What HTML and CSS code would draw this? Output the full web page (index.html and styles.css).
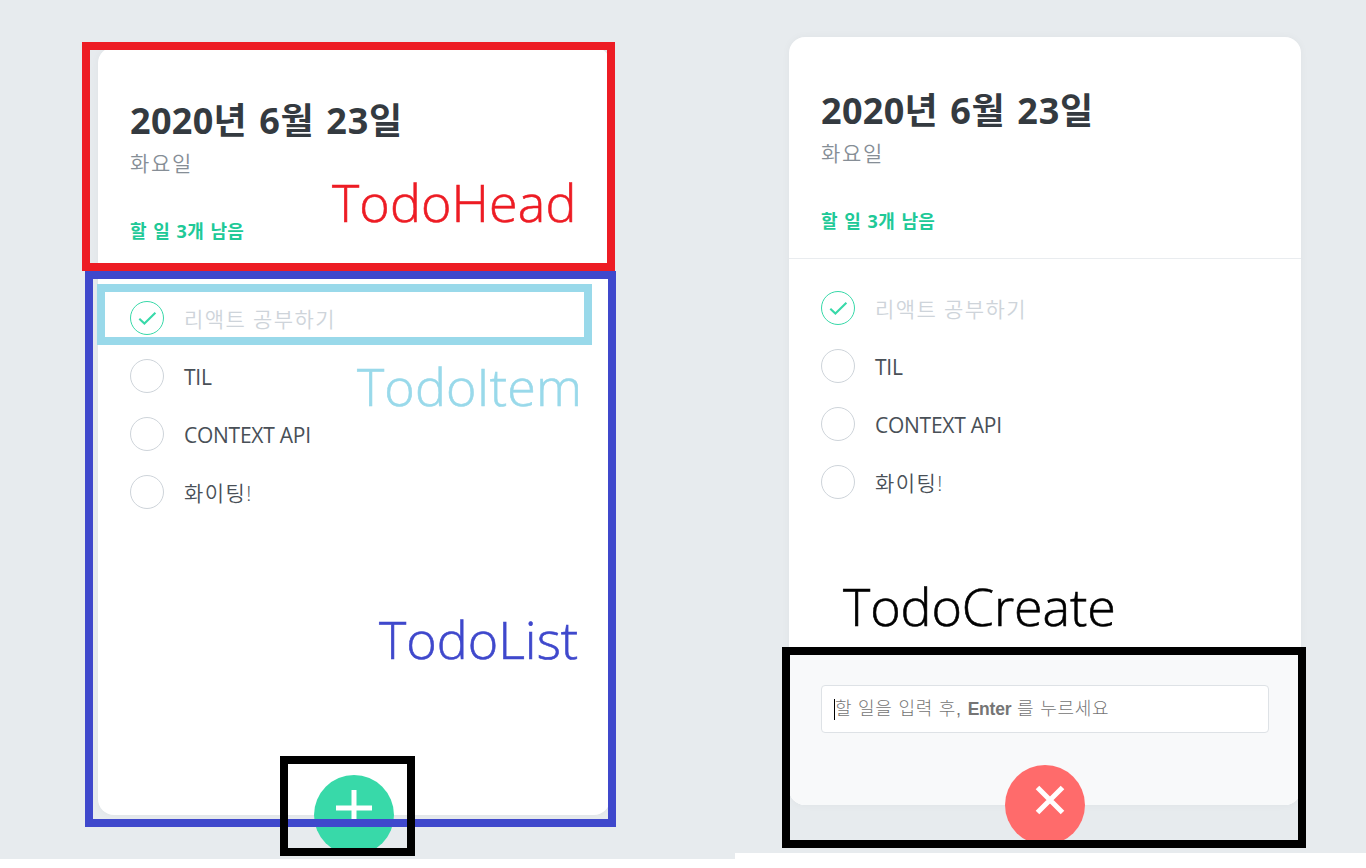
FILE: index.html
```html
<!DOCTYPE html>
<html lang="ko">
<head>
<meta charset="utf-8">
<title>Todo</title>
<link rel="stylesheet" href="styles.css">
</head>
<body>
<main class="board">
  <section class="panel panel-left">
    <article class="card">
      <header class="head">
        <h1 class="date"><span class="num">2020</span>년 6월 23일</h1>
        <div class="day">화요일</div>
        <div class="tasks">할 일 3개 남음</div>
      </header>
      <ul class="list">
        <li class="item done"><span class="circle"><svg viewBox="0 0 34 34"><path d="M9.3 17.8L14.4 22.6L25.4 11.8"/></svg></span><span class="text">리액트 공부하기</span></li>
        <li class="item"><span class="circle"></span><span class="text latin">TIL</span></li>
        <li class="item"><span class="circle"></span><span class="text latin">CONTEXT API</span></li>
        <li class="item"><span class="circle"></span><span class="text">화이팅!</span></li>
      </ul>
      <button class="fab add"><svg viewBox="0 0 80 80"><path d="M22 33H58M40 15V51"/></svg></button>
    </article>
    <div class="frame frame-head"></div>
    <div class="frame frame-list"></div>
    <div class="frame frame-item"></div>
    <div class="frame frame-add"></div>
    <span class="label label-head">TodoHead</span>
    <span class="label label-item">TodoItem</span>
    <span class="label label-list">TodoList</span>
  </section>
  <section class="panel panel-right">
    <article class="card">
      <header class="head">
        <h1 class="date"><span class="num">2020</span>년 6월 23일</h1>
        <div class="day">화요일</div>
        <div class="tasks">할 일 3개 남음</div>
      </header>
      <ul class="list">
        <li class="item done"><span class="circle"><svg viewBox="0 0 34 34"><path d="M9.3 17.8L14.4 22.6L25.4 11.8"/></svg></span><span class="text">리액트 공부하기</span></li>
        <li class="item"><span class="circle"></span><span class="text latin">TIL</span></li>
        <li class="item"><span class="circle"></span><span class="text latin">CONTEXT API</span></li>
        <li class="item"><span class="circle"></span><span class="text">화이팅!</span></li>
      </ul>
      <div class="create">
        <div class="input"><i class="caret"></i><span>할 일을 입력 후, <b>Enter</b> 를 누르세요</span></div>
      </div>
      <button class="fab close"><svg viewBox="0 0 80 80"><path d="M32.5 22.5L57.5 47.5M57.5 22.5L32.5 47.5"/></svg></button>
    </article>
    <div class="frame frame-create"></div>
    <span class="label label-create">TodoCreate</span>
  </section>
</main>
</body>
</html>
```
FILE: styles.css
```css
* { box-sizing: border-box; }
body {
  margin: 0;
  background: #fff;
  font-family: "Open Sans", "Noto Sans CJK KR", sans-serif;
  overflow: hidden;
}
.board {
  display: grid;
  grid-template-columns: 735px 1fr;
  align-items: start;
  height: 868px;
}
.panel { position: relative; background: #e7ebee; }
.panel-left { height: 859px; padding: 47px 0 0 98px; }
.panel-right { height: 853px; padding: 37px 0 0 54px; }
.card {
  position: relative;
  display: flex;
  flex-direction: column;
  width: 512px;
  height: 768px;
  background: #fff;
  border-radius: 16px;
  box-shadow: 0 0 8px rgba(0, 0, 0, 0.04);
}
.head {
  height: 222px;
  padding: 48px 32px 24px;
  border-bottom: 1px solid #e9ecef;
  white-space: nowrap;
}
.date {
  margin: 0;
  padding-top: 1px;
  font-size: 36px;
  line-height: 50px;
  font-weight: 700;
  letter-spacing: 0.8px;
  word-spacing: 1.6px;
  color: #343a40;
}
.num { letter-spacing: 0.3px; }
.day {
  margin-top: 3px;
  font-size: 21px;
  line-height: 28px;
  font-weight: 350;
  color: #868e96;
  letter-spacing: 1.7px;
}
.tasks {
  margin-top: 42px;
  font-size: 18px;
  line-height: 24px;
  font-weight: 700;
  letter-spacing: 0.4px;
  word-spacing: 1.2px;
  color: #20c997;
}
.list {
  flex: 1;
  margin: 0;
  padding: 20px 32px;
  list-style: none;
}
.item { display: flex; align-items: center; height: 58px; color: #495057; }
.circle {
  width: 34px;
  height: 34px;
  margin-right: 20px;
  border: 1px solid #ced4da;
  border-radius: 50%;
}
.circle svg {
  display: block;
  width: 34px;
  height: 34px;
  margin: -1px;
  fill: none;
  stroke: #38d9a9;
  stroke-width: 2.1;
}
.text {
  padding-top: 2px;
  font-size: 21px;
  line-height: 28px;
  font-weight: 350;
  letter-spacing: 1.4px;
  white-space: nowrap;
}
.latin { font-weight: 400; letter-spacing: -0.25px; }
.done .circle { border-color: #38d9a9; }
.done .text { color: #ced4da; }
.create {
  height: 152px;
  padding: 32px;
  background: #f8f9fa;
  border-radius: 0 0 16px 16px;
}
.input {
  display: flex;
  align-items: center;
  height: 48px;
  padding-left: 12px;
  background: #fff;
  border: 1px solid #dee2e6;
  border-radius: 4px;
  color: #757575;
  font: 300 18px/24px "Liberation Sans", "Noto Sans CJK KR", sans-serif;
  letter-spacing: 0.75px;
  white-space: nowrap;
}
.input b { font-size: 17.5px; font-weight: 700; letter-spacing: -0.2px; }
.caret { width: 1px; height: 21px; background: #000; }
.fab {
  position: absolute;
  left: 216px;
  bottom: -40px;
  width: 80px;
  height: 80px;
  padding: 0;
  border: 0;
  border-radius: 50%;
}
.fab svg { display: block; width: 80px; height: 80px; fill: none; stroke: #fff; stroke-width: 5; }
.add { background: #38d9a9; }
.close { background: #ff6b6b; }
.frame { position: absolute; border: 8px solid; }
.frame-head { left: 82px; top: 42px; width: 533px; height: 229px; border-color: #ed1c24; }
.frame-list { left: 85px; top: 271px; width: 531px; height: 556px; border-color: #3f48cc; }
.frame-item { left: 97px; top: 284px; width: 495px; height: 61px; border-color: #99d9ea; }
.frame-add { left: 280px; top: 756px; width: 135px; height: 100px; border-color: #000; }
.frame-create { left: 47px; top: 647px; width: 524px; height: 201px; border-color: #000; }
.label {
  position: absolute;
  font-size: 52px;
  line-height: 70px;
  font-weight: 300;
  -webkit-text-stroke: 0.6px currentColor;
  white-space: nowrap;
}
.label-head { left: 332px; top: 167px; color: #ed1c24; letter-spacing: 0.1px; }
.label-item { left: 357px; top: 351px; color: #99d9ea; letter-spacing: 0.1px; }
.label-list { left: 379px; top: 604px; color: #3f48cc; }
.label-create { left: 108px; top: 571px; color: #000; letter-spacing: -0.1px; }
```
